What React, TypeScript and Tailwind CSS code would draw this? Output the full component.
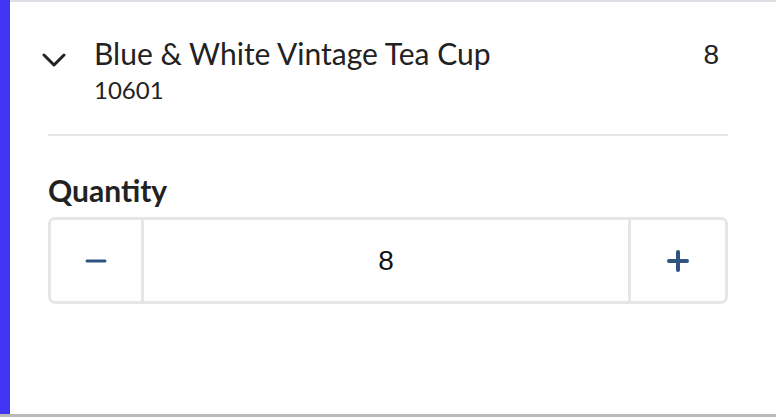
import React from "react";

export default function App() {
  return (
    <div className="w-[776px] h-[417px] bg-white border-b-[3px] border-[#b9b9b9] flex overflow-hidden" style={{ fontFamily: "Lato, 'Noto Sans', sans-serif" }}>
      <div className="w-[10px] shrink-0 bg-[#4234f5]" />
      <div className="flex-1 border-t-2 border-[#dcdfe3] flex flex-col">
        <div className="flex items-start pl-[32px] pr-[57px] pt-[33px]">
          <svg width="24" height="16" viewBox="0 0 24 16" className="mt-[17px] shrink-0" fill="none">
            <polyline points="2,3 12,13 22,3" stroke="#222" strokeWidth="3" strokeLinecap="round" strokeLinejoin="round" />
          </svg>
          <div className="ml-[28px] flex-1">
            <div className="text-[30px] leading-[36px] text-[#222]">Blue &amp; White Vintage Tea Cup</div>
            <div className="text-[24px] leading-[28px] text-[#222] mt-[5px]">10601</div>
          </div>
          <div className="text-[28px] leading-[36px] text-[#222] mt-[2px]" style={{ fontFamily: "'Liberation Sans', Arial, sans-serif" }}>8</div>
        </div>
        <div className="ml-[38px] mr-[48px] mt-[30px] h-[2px] bg-[#e5e5e5]" />
        <div className="ml-[38px] mr-[48px] mt-[36px]">
          <div className="text-[30px] leading-[36px] font-bold text-[#222]">Quantity</div>
          <div className="mt-[9px] h-[87px] border-[3px] border-[#e6e6e8] rounded-[7px] flex">
            <div className="w-[93px] flex items-center justify-center border-r-[3px] border-[#e6e6e8]">
              <svg width="22" height="4" viewBox="0 0 22 4">
                <line x1="2" y1="2" x2="20" y2="2" stroke="#2f5482" strokeWidth="3" strokeLinecap="round" />
              </svg>
            </div>
            <div className="flex-1 flex items-center justify-center text-[28px] text-[#111]" style={{ fontFamily: "'Liberation Sans', Arial, sans-serif" }}>8</div>
            <div className="w-[97px] flex items-center justify-center border-l-[3px] border-[#e6e6e8]">
              <svg width="24" height="24" viewBox="0 0 24 24">
                <line x1="3" y1="12" x2="21" y2="12" stroke="#2f5482" strokeWidth="4" strokeLinecap="round" />
                <line x1="12" y1="3" x2="12" y2="21" stroke="#2f5482" strokeWidth="4" strokeLinecap="round" />
              </svg>
            </div>
          </div>
        </div>
      </div>
    </div>
  );
}
